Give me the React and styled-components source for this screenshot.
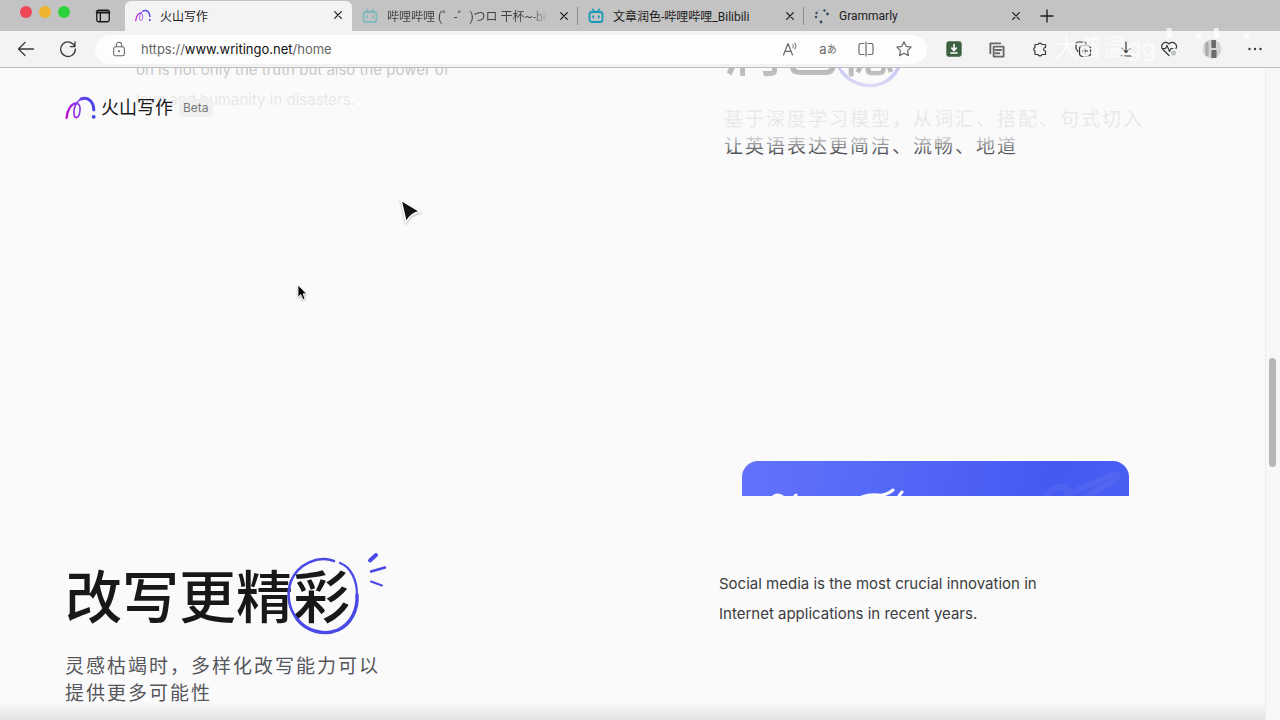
import React from "react";
import styled, { createGlobalStyle, css } from "styled-components";

const GlobalStyle = createGlobalStyle`
  *,
  *::before,
  *::after {
    box-sizing: border-box;
  }
  body {
    margin: 0;
    background: #fafafa;
    color: #17181a;
    font-family: Inter, "Noto Sans CJK SC", sans-serif;
  }
  h2,
  p {
    margin: 0;
  }
  button {
    padding: 0;
    border: 0;
    background: none;
    color: inherit;
    font: inherit;
  }
`;

const Browser = styled.div`
  position: relative;
  display: flex;
  flex-direction: column;
  height: 100vh;
  overflow: hidden;
`;

/* ---------- tab strip ---------- */

const TabStrip = styled.div`
  display: flex;
  height: 31px;
  background: #c3c3c3;
`;

const WindowControls = styled.div`
  display: flex;
  flex: none;
  width: 125px;
  padding: 6px 0 0 20px;
  gap: 7px;
`;

const Light = styled.button`
  width: 12px;
  height: 12px;
  border-radius: 50%;
  background: ${({ $color }) => $color};
`;

const PanelButton = styled.button`
  display: flex;
  height: 20px;
  margin-left: 18px;
  align-items: center;
`;

const Tab = styled.div`
  display: flex;
  flex: 0 1 226px;
  min-width: 0;
  align-items: center;
  padding: 0 6px 0 10px;
  font-family: Roboto, "Noto Sans CJK SC", sans-serif;
  font-size: 12px;
  position: relative;

  &:not(:last-of-type)::after {
    content: "";
    position: absolute;
    right: 0;
    top: 7px;
    height: 18px;
    border-right: 1px solid #8c8c8c;
  }

  ${({ $active }) =>
    $active &&
    css`
      margin-top: 1px;
      padding-bottom: 2px;
      background: #f3f3f3;
      border-radius: 6px 6px 0 0;
      flex-basis: 227px;

      &:not(:last-of-type)::after {
        display: none;
      }
    `}

  svg {
    flex: none;
  }
`;

const TabTitle = styled.span`
  flex: 1;
  margin: 0 8px 0 9px;
  overflow: hidden;
  white-space: nowrap;
  color: ${({ $muted }) => ($muted ? "#444" : "#1c1c1c")};
  ${({ $muted }) =>
    $muted &&
    css`
      mask-image: linear-gradient(90deg, #000 88%, transparent);
    `}
`;

const CloseButton = styled.button`
  display: flex;
  flex: none;
  width: 16px;
  height: 16px;
  align-items: center;
  justify-content: center;
`;

const NewTab = styled(CloseButton)`
  width: 33px;
  height: 31px;
`;

/* ---------- toolbar ---------- */

const Toolbar = styled.div`
  display: flex;
  align-items: center;
  height: 37px;
  padding: 0 4px 0 5px;
  background: #f3f3f3;
  border-bottom: 1px solid #bdbdbd;
`;

const ToolButton = styled.button`
  display: flex;
  flex: none;
  align-items: center;
  justify-content: center;
  width: ${({ $width }) => $width || 43}px;
  height: 28px;
  color: ${({ $soft }) => ($soft ? "#6a6a6a" : "#3a3a3a")};
`;

const AddressBar = styled.div`
  display: flex;
  flex: 1;
  min-width: 0;
  align-items: center;
  height: 29px;
  margin: 0 5px 0 6px;
  padding: 0 4px 0 16px;
  border-radius: 15px;
  background: #fdfdfd;
  color: #666;
`;

const Url = styled.a`
  flex: 1;
  margin-left: 14px;
  color: #666;
  font-size: 13px;
  text-decoration: none;

  b {
    color: #111;
    font-weight: 400;
  }
`;

const Glyph = styled.span`
  font-size: ${({ $size }) => $size}px;
  line-height: 16px;
`;

/* ---------- page ---------- */

const Viewport = styled.div`
  position: relative;
  display: flex;
  flex: 1;
  min-height: 0;
  overflow: hidden;
`;

const Content = styled.main`
  flex: 1;
  min-width: 0;
  margin-top: -49px;
  padding: 0 65px;
`;

const ScrollTrack = styled.div`
  flex: none;
  width: 15px;
  padding: 290px 4px 0 3px;
  border-left: 1px solid #ececec;
  background: #f7f7f7;
`;

const ScrollThumb = styled.div`
  height: 109px;
  width: 7px;
  border-radius: 4px;
  background: #b6b6b6;
`;

const SiteHeader = styled.header`
  position: absolute;
  top: 0;
  left: 0;
  right: 15px;
  display: flex;
  align-items: center;
  height: 84px;
  padding: 0 65px 5px;
  background: linear-gradient(
    rgba(250, 250, 250, 0.7),
    rgba(250, 250, 250, 0.9) 35%,
    rgba(250, 250, 250, 0.88) 80%,
    rgba(250, 250, 250, 0)
  );
`;

const Brand = styled.a`
  display: flex;
  align-items: center;
  gap: 5px;
  color: #17181a;
  font-size: 18px;
  line-height: 24px;
  text-decoration: none;
`;

const Badge = styled.span`
  margin-left: 6px;
  padding: 0 4px;
  border-radius: 4px;
  background: #f0f0f1;
  color: #777;
  font-size: 12px;
  line-height: 18px;
`;

const Feature = styled.section`
  display: grid;
  grid-template-columns: minmax(0, 1fr) 481px;
  align-items: start;
  min-height: 442px;
`;

const Copy = styled.div`
  padding: ${({ $offset }) => ($offset ? "105px 0 0 0" : "0 0 0 5px")};
`;

const Title = styled.h2`
  font-family: "Noto Sans CJK SC", sans-serif;
  font-size: 57px;
  font-weight: 500;
  line-height: 54px;
  white-space: nowrap;
`;

const Circled = styled.span`
  position: relative;

  svg {
    position: absolute;
    left: -7px;
    top: 2px;
    overflow: visible;
  }
`;

const Lead = styled.p`
  margin-top: 31px;
  color: #55565a;
  font-family: "Noto Sans CJK SC", sans-serif;
  font-size: 19px;
  font-weight: 400;
  letter-spacing: 2px;
  line-height: 27px;
`;

const Demo = styled.div`
  padding: ${({ $inset }) => ($inset ? "36px 0 0 71px" : "0")};
`;

const DemoCard = styled.div`
  width: 387px;
  height: 35px;
  margin: 0 0 73px 23px;
  overflow: hidden;
  border-radius: 16px 16px 0 0;
  background: linear-gradient(100deg, #6272fb, #5166f6 45%, #4459f0 80%, #4a5ff2);

  svg {
    display: block;
  }
`;

const DemoText = styled.p`
  max-width: 340px;
  color: #3c3d40;
  font-size: 15px;
  line-height: 30px;
`;

const BottomShade = styled.div`
  position: absolute;
  left: 0;
  right: 15px;
  bottom: 0;
  height: 18px;
  background: linear-gradient(rgba(225, 225, 225, 0), rgba(225, 225, 225, 0.9));
`;

const Pointer = styled.svg`
  position: absolute;
  left: ${({ $x }) => $x}px;
  top: ${({ $y }) => $y}px;
  overflow: visible;
  filter: drop-shadow(0 1px 1px rgba(0, 0, 0, 0.3));
`;

const Watermark = styled.div`
  position: absolute;
  top: 22px;
  right: 24px;
  display: flex;
  align-items: center;
  gap: 8px;
  color: rgba(255, 255, 255, 0.7);
  font-size: 24px;
  line-height: 52px;
  pointer-events: none;
`;

/* ---------- icons ---------- */

const Icon = ({ size = 18, width = 1.2, children }) => (
  <svg
    width={size}
    height={size}
    viewBox="0 0 18 18"
    fill="none"
    stroke="currentColor"
    strokeWidth={width}
    strokeLinecap="round"
    strokeLinejoin="round"
    aria-hidden="true"
  >
    {children}
  </svg>
);

const CloseIcon = () => (
  <Icon size={12} width={1.8}>
    <path d="M4 4l10 10M14 4L4 14" />
  </Icon>
);

const Logo = ({ id, width, height }) => (
  <svg width={width} height={height} viewBox="0 0 31 24" fill="none" aria-hidden="true">
    <defs>
      <linearGradient id={id} x1="0" y1="20" x2="30" y2="8" gradientUnits="userSpaceOnUse">
        <stop stopColor="#c800c8" />
        <stop offset="0.45" stopColor="#8a3bea" />
        <stop offset="1" stopColor="#3e46e8" />
      </linearGradient>
    </defs>
    <g stroke={`url(#${id})`} strokeLinecap="round">
      <path d="M1.5 22C2.5 13 6.5 7.5 11 7.3" strokeWidth="2.2" />
      <path
        d="M11 7.3C15.3 7.3 15.8 13 14.4 18C13.2 22.6 9.6 22.8 9 18.4C8.2 11 13 2 20 2"
        strokeWidth="1.6"
      />
      <path d="M16 3C23 .3 28.6 5.500 28.8 14" strokeWidth="3" />
    </g>
    <circle cx="28.700" cy="20.800" r="1.900" fill="#3e46e8" />
  </svg>
);

const BiliIcon = ({ color }) => (
  <svg width="16" height="16" viewBox="0 0 16 16" fill="none" stroke={color} strokeLinecap="round" aria-hidden="true">
    <rect x="1.500" y="4" width="13" height="10" rx="2.500" strokeWidth="1.800" />
    <path d="M4.500 1.300l2 2.200M11.500 1.300l-2 2.200" strokeWidth="1.500" />
    <path d="M5.200 8.200v1.300M10.800 8.200v1.300" strokeWidth="1.800" />
  </svg>
);

const DotsIcon = () => (
  <svg width="16" height="16" viewBox="0 0 16 16" aria-hidden="true">
    <g fill="#34495e">
      <circle cx="2.500" cy="5" r="1.200" />
      <circle cx="2" cy="9" r="1.200" />
      <circle cx="7" cy="14" r="1.400" />
      <circle cx="13.500" cy="6" r="1.400" />
      <circle cx="10.500" cy="2.500" r="1.200" />
      <circle cx="4.500" cy="2.500" r=".8" fill="#7aa7c4" />
    </g>
  </svg>
);

const CircleMark = ({ faded }) => (
  <svg width="102" height="82" viewBox="0 0 102 82" fill="none" stroke="#4b49e6" strokeLinecap="round" aria-hidden="true">
    <path d="M48 7C32 1 12 10 5 27C0 41 3 55 11 65" strokeWidth="2.600" />
    <path d="M11 65C20 77 38 82 52 76C65 70 72 56 71 41" strokeWidth="3.400" />
    <path d="M71 41C71 26 65 13 54 9" strokeWidth="2.200" />
    {!faded && (
      <>
        <path d="M84 6.500l6-5.500" strokeWidth="4" />
        <path d="M85 17.500l14-4" strokeWidth="2.600" />
        <path d="M85 27.500l11 4" strokeWidth="2" />
      </>
    )}
  </svg>
);

const tabs = [
  { title: "火山写作", icon: <Logo id="tabLogo" width={16} height={13} />, active: true },
  { title: "哔哩哔哩 (゜-゜)つロ 干杯~-bilibili", icon: <BiliIcon color="#7fb8bd" />, muted: true },
  { title: "文章润色-哔哩哔哩_Bilibili", icon: <BiliIcon color="#1798b8" /> },
  { title: "Grammarly", icon: <DotsIcon /> },
];

const App = () => {
  return (
    <>
      <GlobalStyle />
      <Browser>
        <TabStrip>
          <WindowControls>
            <Light $color="#ee4557" aria-label="Close window" />
            <Light $color="#f0b32c" aria-label="Minimise window" />
            <Light $color="#2bd33b" aria-label="Zoom window" />
            <PanelButton aria-label="Tab actions">
              <Icon size={16} width={1.5}>
                <rect x="2" y="2.500" width="14" height="13" rx="2" />
                <path d="M2 5h14" strokeWidth="2.400" />
                <path d="M6 5v10" />
              </Icon>
            </PanelButton>
          </WindowControls>
          {tabs.map(({ title, icon, active, muted }) => (
            <Tab key={title} $active={active}>
              {icon}
              <TabTitle $muted={muted}>{title}</TabTitle>
              <CloseButton aria-label={`Close ${title}`}>
                <CloseIcon />
              </CloseButton>
            </Tab>
          ))}
          <NewTab aria-label="New tab">
            <Icon size={18} width={1.3}>
              <path d="M9 3v12M3 9h12" />
            </Icon>
          </NewTab>
        </TabStrip>

        <Toolbar>
          <ToolButton $width={42} aria-label="Back">
            <Icon width={1.3}>
              <path d="M16.500 9h-15M8 2.500L1.500 9L8 15.500" />
            </Icon>
          </ToolButton>
          <ToolButton $width={42} aria-label="Reload">
            <Icon width={1.3}>
              <path d="M15.800 6.500A7.300 7.300 0 1 0 16.300 9M16 2v4.600h-4.600" />
            </Icon>
          </ToolButton>
          <AddressBar>
            <Icon size={16}>
              <rect x="3" y="6.500" width="12" height="10" rx="2" />
              <path d="M6 6.500V4.500a3 3 0 0 1 6 0v2" />
              <circle cx="9" cy="11.500" r=".6" fill="currentColor" />
            </Icon>
            <Url href="https://www.writingo.net/home">
              https://<b>www.writingo.net</b>/home
            </Url>
            <ToolButton $width={38} $soft aria-label="Read aloud">
              <Icon>
                <path d="M2.500 15L7 3.500L11.500 15M4 11.300h6" />
                <path d="M12 4.500q1.300 1.500 0 3.400M14 3q2.400 2.800 0 6.200" strokeWidth="1" />
              </Icon>
            </ToolButton>
            <ToolButton $width={38} $soft aria-label="Translate">
              <Glyph $size={13}>a</Glyph>
              <Glyph $size={10}>あ</Glyph>
            </ToolButton>
            <ToolButton $width={38} $soft aria-label="Split screen">
              <Icon>
                <path d="M7 3.500H3.500a1.500 1.500 0 0 0-1.500 1.500v8a1.500 1.500 0 0 0 1.500 1.500H7M11 3.500h3.500a1.500 1.500 0 0 1 1.500 1.500v8a1.500 1.500 0 0 1-1.500 1.500H11M9 2v14" />
              </Icon>
            </ToolButton>
            <ToolButton $width={38} $soft aria-label="Add to favourites">
              <Icon>
                <path d="M9 1.800l2.200 4.600 5 .7-3.600 3.500.8 5L9 13.200l-4.400 2.400.8-5L1.800 7.100l5-.7z" />
              </Icon>
            </ToolButton>
          </AddressBar>
          <ToolButton aria-label="Downloader">
            <Icon size={16}>
              <rect x="1" y="1" width="16" height="16" rx="2" fill="#3b6140" stroke="#3b6140" />
              <path d="M9 4v6M6.500 8L9 10.800L11.500 8M5.500 13.500h7" stroke="#fff" strokeWidth="1.800" />
            </Icon>
          </ToolButton>
          <ToolButton $soft aria-label="Copy tabs">
            <Icon size={17} width={2}>
              <path d="M2.500 13V2.500H13" />
              <rect x="6" y="6" width="10.500" height="10.500" />
              <path d="M8 9.500h6M8 13h4" />
            </Icon>
          </ToolButton>
          <ToolButton aria-label="Extensions">
            <Icon>
              <path d="M4 4.500h3a2.100 2.100 0 0 1 4 0h3.500v3a1.800 1.800 0 0 0 0 3.600v3.400H11a2.100 2.100 0 0 1-4 0H4v-3.300a2.100 2.100 0 0 1 0-3.800z" />
            </Icon>
          </ToolButton>
          <ToolButton aria-label="Collections">
            <Icon>
              <path d="M4 11.500L2 8.500V4a2 2 0 0 1 2-2h6a2 2 0 0 1 2 2" />
              <rect x="5.500" y="5.500" width="11" height="11" rx="3" />
              <path d="M11 8.500v5M8.500 11h5" />
            </Icon>
          </ToolButton>
          <ToolButton aria-label="Downloads">
            <Icon>
              <path d="M9 2v10.500M5 8.500l4 4 4-4M4 16h10" />
            </Icon>
          </ToolButton>
          <ToolButton aria-label="Browser essentials">
            <Icon>
              <path d="M9 15.500L3 9.500a4 4 0 0 1 0-6 4 4 0 0 1 6 .5 4 4 0 0 1 6-.5 4 4 0 0 1 1 5M2 8.500h3.500L7 5.500l2.500 6 1.500-3h2" />
              <circle cx="13.500" cy="13" r="2.500" fill="#b9c3b9" stroke="none" />
            </Icon>
          </ToolButton>
          <ToolButton aria-label="Profile">
            <Icon size={20}>
              <circle cx="9" cy="9" r="8.500" fill="#d5d5d3" stroke="none" />
              <path d="M9 1.500h3v6H9zM9 10.500h3.500v6H9z" fill="#6d6d6d" stroke="#6d6d6d" />
              <path d="M4.500 4v10" stroke="#aaa" strokeWidth="3" />
            </Icon>
          </ToolButton>
          <ToolButton aria-label="More">
            <Icon>
              <g fill="currentColor" stroke="none">
                <circle cx="3.500" cy="9" r="1.200" />
                <circle cx="9" cy="9" r="1.200" />
                <circle cx="14.500" cy="9" r="1.200" />
              </g>
            </Icon>
          </ToolButton>
        </Toolbar>

        <Viewport>
          <Content>
            <Feature>
              <Demo $inset>
                <DemoText>on is not only the truth but also the power of love and humanity in disasters.</DemoText>
              </Demo>
              <Copy>
                <Title>
                  润色
                  <Circled>
                    稳
                    <CircleMark faded />
                  </Circled>
                </Title>
                <Lead>
                  基于深度学习模型，从词汇、搭配、句式切入
                  <br />
                  让英语表达更简洁、流畅、地道
                </Lead>
              </Copy>
            </Feature>

            <Feature>
              <Copy $offset>
                <Title>
                  改写更精
                  <Circled>
                    彩
                    <CircleMark />
                  </Circled>
                </Title>
                <Lead>
                  灵感枯竭时，多样化改写能力可以
                  <br />
                  提供更多可能性
                </Lead>
              </Copy>
              <Demo>
                <DemoCard>
                  <svg width="387" height="35" viewBox="0 0 387 35" fill="none" strokeLinecap="round" aria-hidden="true">
                    <path d="M31 36q4-4 10 0M52 36l2-2M120 36q8-3 16-2t15-5M157 35l3-4" stroke="#fff" strokeWidth="3" />
                    <path d="M302 36q8-10 18-10t4 9M326 33l45-19q8-2 2 5l-28 16" stroke="#6b7cf8" strokeOpacity=".25" strokeWidth="6" />
                  </svg>
                </DemoCard>
                <DemoText>Social media is the most crucial innovation in Internet applications in recent years.</DemoText>
              </Demo>
            </Feature>
          </Content>
          <ScrollTrack>
            <ScrollThumb />
          </ScrollTrack>

          <SiteHeader>
            <Brand href="#home">
              <Logo id="brandLogo" width={31} height={24} />
              火山写作
            </Brand>
            <Badge>Beta</Badge>
          </SiteHeader>
          <BottomShade />

          <Pointer $x={401} $y={132} width="20" height="24" viewBox="0 0 20 24">
            <path d="M0 0L19 11.500Q10 13 5 22Z" fill="#111" stroke="#fff" strokeWidth="1.500" />
          </Pointer>
          <Pointer $x={298} $y={217} width="9" height="15" viewBox="0 0 9 15">
            <path d="M0 0V12L2.800 9.500L5 14.500L7 13.600L5 8.800H8.500Z" fill="#000" stroke="#fff" strokeWidth=".8" />
          </Pointer>
        </Viewport>

        <Watermark>
          大普温gg
          <svg width="92" height="44" viewBox="0 0 92 44" fill="none" stroke="currentColor" strokeWidth="5" aria-hidden="true">
            <path d="M5 2l1 10M52 2l1 10" />
            <path d="M34 7l1 5M82 7l1 5" />
          </svg>
        </Watermark>
      </Browser>
    </>
  );
};

export default App;
